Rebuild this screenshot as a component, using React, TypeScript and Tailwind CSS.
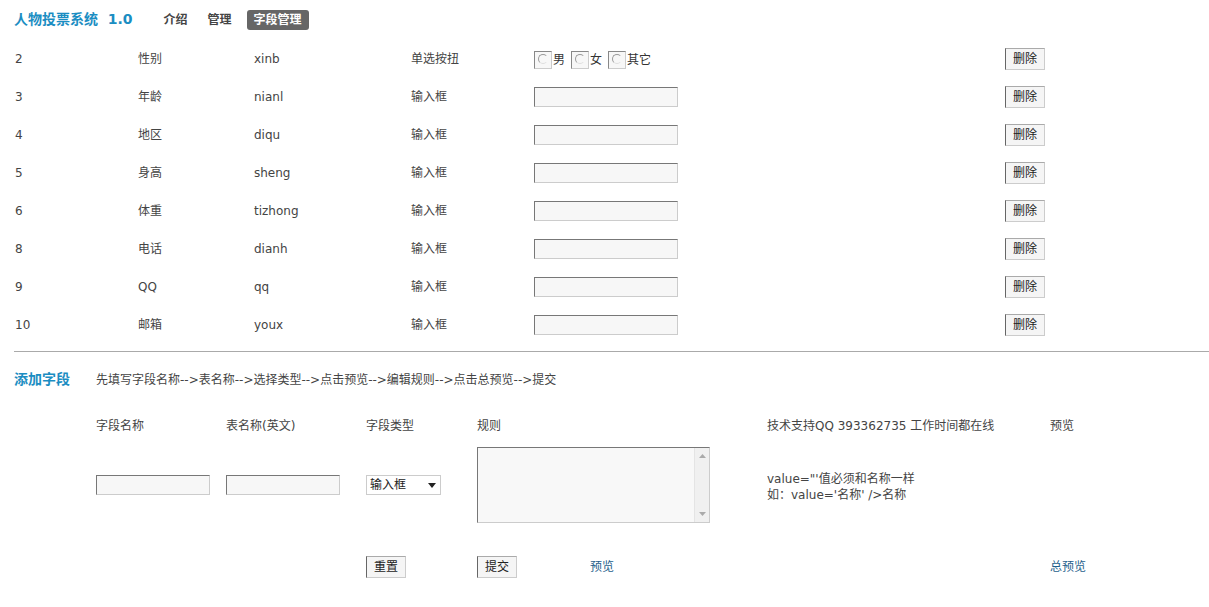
import React from "react"

const rows = [
  { id: "2", name: "性别", field: "xinb", type: "单选按扭", radio: true },
  { id: "3", name: "年龄", field: "nianl", type: "输入框" },
  { id: "4", name: "地区", field: "diqu", type: "输入框" },
  { id: "5", name: "身高", field: "sheng", type: "输入框" },
  { id: "6", name: "体重", field: "tizhong", type: "输入框" },
  { id: "8", name: "电话", field: "dianh", type: "输入框" },
  { id: "9", name: "QQ", field: "qq", type: "输入框" },
  { id: "10", name: "邮箱", field: "youx", type: "输入框" },
]

const font = { fontFamily: '"DejaVu Sans", "Noto Sans CJK SC", sans-serif' }

const Radio = ({ label }: { label: string }) => (
  <span className="flex shrink-0 items-center">
    <span className="flex h-[18px] w-[18px] shrink-0 items-start justify-center border border-t-[#888] border-l-[#888] border-r-[#ccc] border-b-[#ccc] bg-[#f7f7f7] pt-[2px]">
      <span className="block h-[10px] w-[10px] shrink-0 rounded-full border border-[#999] border-r-transparent border-b-[#ddd]"></span>
    </span>
    <span className="ml-px">{label}</span>
  </span>
)

const TextBox = ({ w }: { w: string }) => (
  <span className={`block h-[20px] ${w} border border-t-[#777] border-l-[#777] border-r-[#ccc] border-b-[#ccc] bg-[#f7f7f7]`}></span>
)

const Btn = ({ text }: { text: string }) => (
  <span className="flex h-[22px] w-[40px] items-center justify-center border border-t-[#aaa] border-l-[#666] border-r-[#ccc] border-b-[#ccc] bg-[#f5f5f5] text-[12px] text-[#222]">
    {text}
  </span>
)

export default function App() {
  return (
    <div className="w-[1209px] h-[607px] overflow-hidden bg-white text-[12px] text-[#444]" style={font}>
      {/* header */}
      <div className="flex h-[39px] items-center pl-[14px]">
        <span className="text-[14px] font-bold text-[#1b8dc2]">人物投票系统&nbsp; 1.0</span>
        <span className="ml-[31px] text-[12px] font-bold text-[#444]">介绍</span>
        <span className="ml-[20px] text-[12px] font-bold text-[#444]">管理</span>
        <span className="ml-[15px] rounded-[3px] bg-[#666] px-[7px] py-[1px] text-[12px] font-bold text-white">字段管理</span>
      </div>

      {/* field list */}
      <div className="flex flex-col pt-px">
        {rows.map((r) => (
          <div key={r.id} className="flex h-[38px] items-center">
            <span className="w-[138px] pl-[15px]">{r.id}</span>
            <span className="w-[116px]">{r.name}</span>
            <span className="w-[157px]">{r.field}</span>
            <span className="w-[123px]">{r.type}</span>
            <span className="w-[471px]">
              {r.radio ? (
                <span className="flex items-center gap-[6px] pt-[2px] text-[#333]">
                  <Radio label="男" />
                  <Radio label="女" />
                  <Radio label="其它" />
                </span>
              ) : (
                <TextBox w="w-[144px]" />
              )}
            </span>
            <Btn text="删除" />
          </div>
        ))}
      </div>

      <div className="ml-[14px] mt-[7px] h-px bg-[#aaa]"></div>

      {/* add field */}
      <div className="flex items-end pl-[14px] pt-[17px]">
        <span className="w-[82px] text-[14px] font-bold text-[#1b8dc2]">添加字段</span>
        <span className="pb-[1px]">先填写字段名称--&gt;表名称--&gt;选择类型--&gt;点击预览--&gt;编辑规则--&gt;点击总预览--&gt;提交</span>
      </div>

      <div className="mt-[27px] flex pl-[96px]">
        <span className="w-[130px]">字段名称</span>
        <span className="w-[140px]">表名称(英文)</span>
        <span className="w-[111px]">字段类型</span>
        <span className="w-[290px]">规则</span>
        <span className="w-[283px]">技术支持QQ 393362735 工作时间都在线</span>
        <span>预览</span>
      </div>

      <div className="mt-[12px] flex items-center pl-[96px]">
        <span className="w-[130px]">
          <TextBox w="w-[114px]" />
        </span>
        <span className="w-[140px]">
          <TextBox w="w-[114px]" />
        </span>
        <span className="w-[111px]">
          <span className="flex h-[20px] w-[75px] items-center justify-between border border-[#ccc] bg-white pl-[3px] pr-[4px] text-[#222]">
            <span>输入框</span>
            <svg width="8" height="5" viewBox="0 0 8 5">
              <path d="M0 0 L8 0 L4 5 Z" fill="#222" />
            </svg>
          </span>
        </span>
        <span className="w-[290px]">
          <span className="flex h-[76px] w-[233px] border border-t-[#777] border-l-[#777] border-r-[#ccc] border-b-[#ccc] bg-[#f8f8f8]">
            <span className="flex-1"></span>
            <span className="flex w-[15px] flex-col items-center justify-between border-l border-[#e4e4e4] bg-[#f0f0f0] py-[6px]">
              <svg width="7" height="4" viewBox="0 0 7 4">
                <path d="M0 4 L7 4 L3.5 0 Z" fill="#aaa" />
              </svg>
              <svg width="7" height="4" viewBox="0 0 7 4">
                <path d="M0 0 L7 0 L3.5 4 Z" fill="#aaa" />
              </svg>
            </span>
          </span>
        </span>
        <span className="flex flex-col pt-[4px] leading-[16px]">
          <span>value="'值必须和名称一样</span>
          <span>如：value='名称' /&gt;名称</span>
        </span>
      </div>

      <div className="mt-[33px] flex items-center pl-[366px]">
        <span className="w-[111px]">
          <Btn text="重置" />
        </span>
        <span className="w-[113px]">
          <Btn text="提交" />
        </span>
        <span className="w-[460px] text-[#1f5f8c]">预览</span>
        <span className="text-[#1f5f8c]">总预览</span>
      </div>
    </div>
  )
}
